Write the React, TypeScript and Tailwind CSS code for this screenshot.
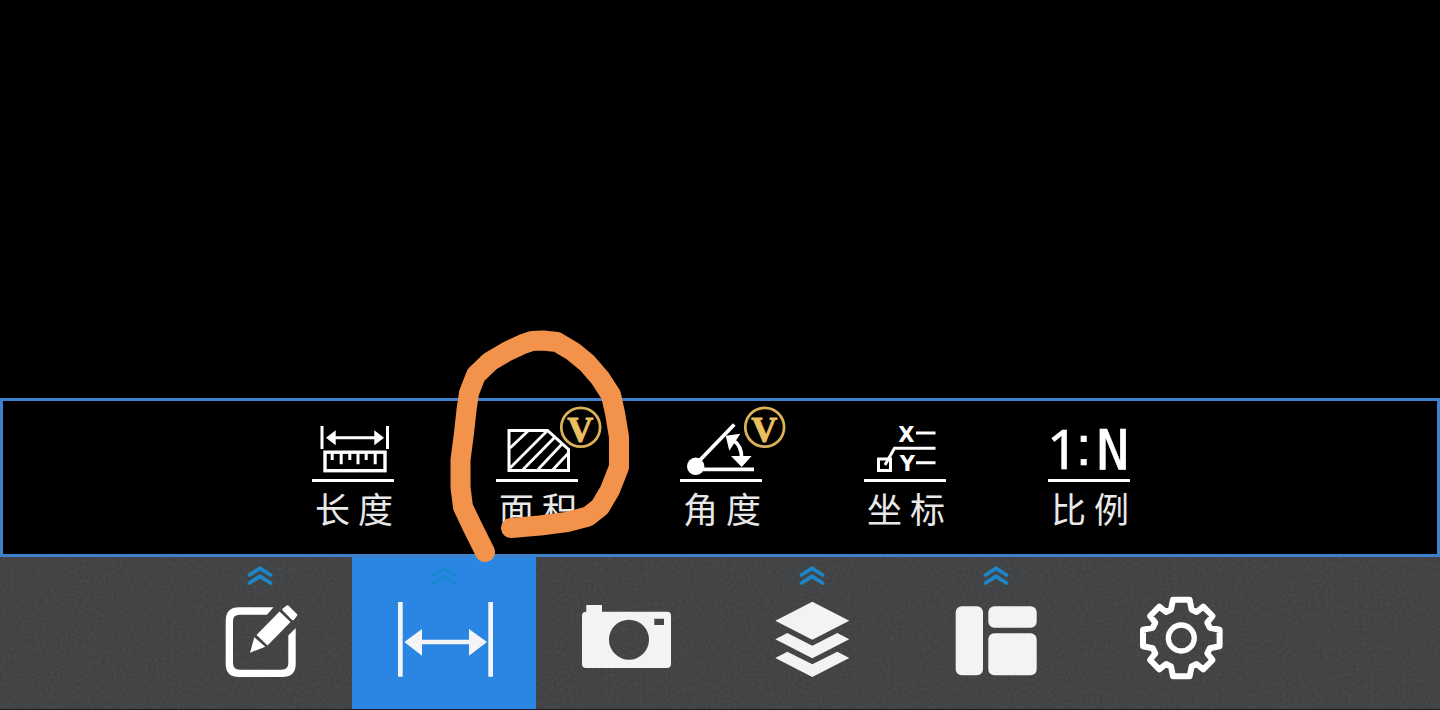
import type { ReactNode } from "react";
import clsx from "clsx";

interface Tool {
  label: string;
  icon: ReactNode;
  vip?: boolean;
  marked?: boolean;
}

interface NavItem {
  label: string;
  icon: ReactNode;
  expandable?: boolean;
  active?: boolean;
}

function LengthIcon() {
  return (
    <g fill="none" stroke="#fff" strokeWidth="3">
      <path d="M61 25V48M126.5 25V48M72 36.7H117" />
      <path d="M65 36.7L74.7 29.2V44.2ZM123 36.7L113.3 29.2V44.2Z" fill="#fff" stroke="none" />
      <rect x="64" y="51.2" width="60" height="18.5" strokeWidth="3.4" />
      <path d="M71.2 52V59M80.2 52V63.3M88.8 52V59M97 52V63.3M105.2 52V59M114.2 52V63.3" />
    </g>
  );
}

function AreaIcon() {
  return (
    <g fill="none" stroke="#fff">
      <path d="M64 29.5H102.5L123.5 48.5V69.5H64Z" strokeWidth="3" />
      <path
        d="M65 47L83 30M65 67L102 30M78 68.5L110 36M93 68.5L117 43M108 68.5L123.5 52"
        strokeWidth="2.8"
      />
    </g>
  );
}

function AngleIcon() {
  return (
    <g fill="#fff">
      <circle cx="66.7" cy="65.3" r="8.7" />
      <path d="M66.7 63.5L105.3 23.5M66.7 68.3H125" fill="none" stroke="#fff" strokeWidth="3.8" />
      <path d="M104 39Q113 45 112.5 57" fill="none" stroke="#fff" strokeWidth="3.8" />
      <path d="M96.7 34.7L111.3 32.7L100.3 49.7ZM102 55H122.7L112.7 66Z" />
    </g>
  );
}

function CoordIcon() {
  return (
    <g fill="none" stroke="#fff" strokeWidth="3">
      <path d="M103 32H122.5M103 61.7H122.5M122.5 47.3H81.5L72 64" />
      <rect x="65.5" y="58" width="12" height="11.5" />
      <g fill="#fff" stroke="none" fontFamily="DejaVu Sans, sans-serif" fontWeight="700" fontSize="21">
        <text x="93.3" y="40.5" textAnchor="middle">X</text>
        <text x="94.3" y="70" textAnchor="middle">Y</text>
      </g>
    </g>
  );
}

function RatioIcon() {
  return (
    <g fill="#fff" stroke="#fff" strokeWidth="0.6" fontSize="55">
      <text x="50" y="68" fontFamily="Noto Sans, sans-serif">1</text>
      <text x="86.7" y="64" textAnchor="middle" fontFamily="Liberation Sans, sans-serif">:</text>
      <text x="115.7" y="68" textAnchor="middle" fontFamily="DejaVu Sans Mono, monospace">N</text>
    </g>
  );
}

function EditIcon() {
  return (
    <g fill="#fff">
      <path d="M105.5 50.3H71Q57.7 50.3 57.7 64V107Q57.7 120 71 120H114Q127.7 120 127.7 107V71L120.3 78.5V106Q120.3 112.7 113.5 112.7H71.5Q65 112.7 65 106V64Q65 57.7 71.5 57.7H99Z" />
      <path d="M82 95.7L86.3 80.3L97.3 89.7Z" />
      <path d="M88.5 78L111.5 54.5L122.5 65L99.5 88.5Z" />
      <path d="M115.5 52.5L119.5 49.5L128 58L125 62Z" stroke="#fff" strokeWidth="2.5" strokeLinejoin="round" />
    </g>
  );
}

function MeasureIcon() {
  return (
    <g fill="#f4f4f6">
      <path d="M46 45H50.7V119.7H46ZM136.3 45H141V119.7H136.3ZM68 82.7H119V87.3H68Z" />
      <path d="M52.3 85L70 72V98.7ZM135 85L117 72V98.7Z" />
    </g>
  );
}

function CameraIcon() {
  return (
    <path
      fill="#f3f3f3"
      fillRule="evenodd"
      d="M50.3 54.7V48H66V54.7H131Q135 54.7 135 58.7V107Q135 111 131 111H50Q46 111 46 107V58.7Q46 54.7 50.3 54.7ZM93 62.7A20 20 0 1 0 93 102.7A20 20 0 1 0 93 62.7ZM118.3 61.7V68H128V61.7Z"
    />
  );
}

function LayersIcon() {
  return (
    <g fill="#f3f3f3">
      <path d="M92.3 44.7L129.3 63.7L92.3 82.7L55.3 63.7Z" />
      <path d="M55.3 82.3L67.3 76L92.3 88.7L117.3 76L129.3 82.3L92.3 101.3Z" />
      <path d="M55.3 101L67.3 94.7L92.3 107.3L117.3 94.7L129.3 101L92.3 120Z" />
    </g>
  );
}

function LayoutIcon() {
  return (
    <g fill="#f3f3f3">
      <rect x="51.7" y="49.3" width="27.3" height="69" rx="6" />
      <rect x="84.3" y="49.3" width="48.4" height="21.4" rx="6" />
      <rect x="84.3" y="76.3" width="48.4" height="42" rx="6" />
    </g>
  );
}

function GearIcon() {
  return (
    <g transform="translate(93.3 81)" fill="none" stroke="#fff" strokeLinejoin="round">
      <circle r="13" strokeWidth="5.3" />
      <path
        strokeWidth="6"
        d="M-8.3-38.3L8.3-38.3L10.3-28.5L15.3-26L22-31.3L31.3-22L26-15.3L28.5-10.3L38.3-8.3L38.3 8.3L28.5 10.3L26 15.3L31.3 22L22 31.3L15.3 26L10.3 28.5L8.3 38.3L-8.3 38.3L-10.3 28.5L-15.3 26L-22 31.3L-31.3 22L-26 15.3L-28.5 10.3L-38.3 8.3L-38.3-8.3L-28.5-10.3L-26-15.3L-31.3-22L-22-31.3L-15.3-26L-10.3-28.5Z"
      />
    </g>
  );
}

function VipBadge() {
  return (
    <g fill="#e9bf5f">
      <circle cx="135.7" cy="26.3" r="19.4" fill="#000" stroke="#d9b058" strokeWidth="2.8" />
      <text
        x="135.2"
        y="40.5"
        textAnchor="middle"
        fontFamily="Liberation Serif, serif"
        fontWeight="700"
        fontSize="36"
        stroke="#e9bf5f"
        strokeWidth="0.9"
      >
        V
      </text>
    </g>
  );
}

// freehand marker loop drawn around a tool
function MarkerLoop() {
  return (
    <svg
      viewBox="0 0 200 250"
      className="pointer-events-none absolute -top-[81px] -left-[5px] z-10 h-[250px] w-[200px]"
      aria-hidden="true"
    >
      <path
        d="M45 232L33 208L23 187L20.5 167L20.5 140L24 113L26.5 90L29 73L36 55L50 41.5L67 31.5L83 24L92 21L103 20.5L117 22L133 31.5L147 43L160 58L171 75L175 93L179 117L179 147L170 170L160 187L148 196.5L127 202L100 205.5L71 208"
        fill="none"
        stroke="#f3924b"
        strokeWidth="20"
        strokeLinecap="round"
        strokeLinejoin="round"
      />
    </svg>
  );
}

const tools: Tool[] = [
  { label: "长 度", icon: <LengthIcon /> },
  { label: "面 积", icon: <AreaIcon />, vip: true, marked: true },
  { label: "角 度", icon: <AngleIcon />, vip: true },
  { label: "坐 标", icon: <CoordIcon /> },
  { label: "比 例", icon: <RatioIcon /> },
];

const navItems: NavItem[] = [
  { label: "编辑", icon: <EditIcon />, expandable: true },
  { label: "测量", icon: <MeasureIcon />, expandable: true, active: true },
  { label: "拍照", icon: <CameraIcon /> },
  { label: "图层", icon: <LayersIcon />, expandable: true },
  { label: "布局", icon: <LayoutIcon />, expandable: true },
  { label: "设置", icon: <GearIcon /> },
];

export default function App() {
  return (
    <div className="flex min-h-screen flex-col bg-black font-['Noto_Sans_CJK_SC',sans-serif] text-white">
      <main className="flex-1" />

      {/* Measure tools */}
      <section className="flex justify-center border-3 border-[#3f80ca] pl-0.5">
        {tools.map((t) => (
          <button key={t.label} type="button" className="relative flex w-46 flex-col items-center pb-6">
            <svg viewBox="0 0 184 78" className="h-[78px] w-full overflow-visible" aria-hidden="true">
              {t.icon}
              {t.vip && <VipBadge />}
            </svg>
            <span className="h-[3px] w-[82px] bg-white" />
            <span className="mt-1.5 mb-0.5 pl-0.5 text-[35px] leading-10 whitespace-nowrap text-[#e8e8e8]">
              {t.label}
            </span>
            {t.marked && <MarkerLoop />}
          </button>
        ))}
      </section>

      {/* Bottom bar */}
      <nav className="relative flex justify-center border-b border-[#1c1a1e] bg-[#3d3e40]">
        <svg className="pointer-events-none absolute inset-0 h-full w-full opacity-10" aria-hidden="true">
          <filter id="grain">
            <feTurbulence type="fractalNoise" baseFrequency="0.35" numOctaves="2" />
            <feColorMatrix type="saturate" values="0" />
          </filter>
          <rect width="100%" height="100%" filter="url(#grain)" />
        </svg>
        {navItems.map((n) => (
          <button
            key={n.label}
            type="button"
            aria-label={n.label}
            className={clsx("relative w-46", n.active && "bg-[#2b86e3]")}
          >
            <svg viewBox="0 0 184 152" className="h-[152px] w-full" aria-hidden="true">
              {n.expandable && (
                <path
                  d="M81.5 18L92 11.3L102.5 18M81.5 26L92 19.3L102.5 26"
                  fill="none"
                  stroke={n.active ? "#1b88d6" : "#1e86c6"}
                  strokeWidth="3.8"
                  strokeLinecap="round"
                />
              )}
              {n.icon}
            </svg>
          </button>
        ))}
      </nav>
    </div>
  );
}
